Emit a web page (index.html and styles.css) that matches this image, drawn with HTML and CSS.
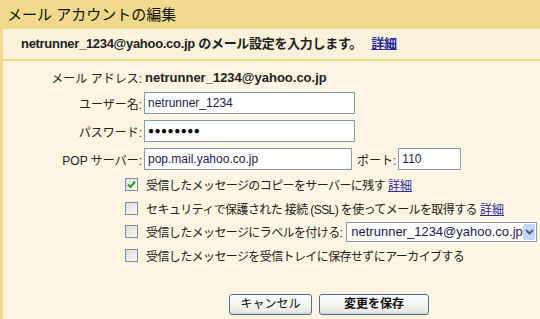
FILE: index.html
```html
<!DOCTYPE html>
<html lang="ja">
<head>
	<meta charset="UTF-8">
	<title>メール アカウントの編集</title>
	<link rel="stylesheet" href="styles.css">
</head>
<body>
<div class="title">メール アカウントの編集</div>
<div class="panel">
	<div class="intro">netrunner_1234@yahoo.co.jp のメール設定を入力します。 <a href="#">詳細</a></div>
	<div class="form">
		<div class="row first">
			<span class="label">メール アドレス:</span>
			<span class="value">netrunner_1234@yahoo.co.jp</span>
		</div>
		<div class="row">
			<span class="label">ユーザー名:</span>
			<span class="field wide">netrunner_1234</span>
		</div>
		<div class="row">
			<span class="label">パスワード:</span>
			<span class="field wide dots">●●●●●●●●</span>
		</div>
		<div class="row">
			<span class="label">POP サーバー:</span>
			<span class="field server">pop.mail.yahoo.co.jp</span>
			<span class="port-label">ポート:</span>
			<span class="field port">110</span>
		</div>
	</div>
	<div class="options">
		<div class="opt">
			<span class="box checked"><svg width="9" height="9" viewBox="0 0 9 9"><path d="M1 4.5 L3.5 7 L8 1.5" fill="none" stroke="#21a121" stroke-width="2"/></svg></span>
			<span>受信したメッセージのコピーをサーバーに残す</span><a href="#">詳細</a>
		</div>
		<div class="opt">
			<span class="box"></span>
			<span>セキュリティで保護された 接続 (SSL) を使ってメールを取得する</span><a href="#">詳細</a>
		</div>
		<div class="opt label-row">
			<span class="box"></span>
			<span>受信したメッセージにラベルを付ける:</span>
			<span class="select">
				<span class="select-text">netrunner_1234@yahoo.co.jp</span>
				<span class="arrow"><svg width="9" height="6" viewBox="0 0 9 6"><path d="M1 1 L4.5 4.5 L8 1" fill="none" stroke="#4d6185" stroke-width="2"/></svg></span>
			</span>
		</div>
		<div class="opt">
			<span class="box"></span>
			<span>受信したメッセージを受信トレイに保存せずにアーカイブする</span>
		</div>
	</div>
	<div class="buttons">
		<button class="btn cancel">キャンセル</button>
		<button class="btn save">変更を保存</button>
	</div>
</div>
</body>
</html>
```

FILE: styles.css
```css
body {
	margin: 0;
	font-family: "Liberation Sans", "Noto Sans CJK JP", sans-serif;
	font-size: 12px;
	color: #222;
	background: #FCF5E2;
	height: 319px;
	overflow: hidden;
}

a {
	color: #2B2BA0;
	text-decoration: underline;
}

.title {
	height: 29px;
	background: #F0D98A;
	font-size: 15px;
	line-height: 29px;
	padding-left: 7px;
	color: #111;
}

.panel {
	border-left: 3px solid #F0D98A;
	height: 290px;
}

.intro {
	height: 30px;
	line-height: 30px;
	padding-left: 18px;
	font-size: 13px;
	font-weight: bold;
	letter-spacing: -0.3px;
	color: #222;
	background: #FAF2DB;
	border-bottom: 2px solid #F0D98A;
	white-space: nowrap;
}

.intro a {
	margin-left: 6px;
}

.form {
	display: flex;
	flex-direction: column;
	gap: 6px;
	padding-top: 5px;
}

.row {
	display: flex;
	align-items: center;
	height: 22px;
}

.row.first {
	margin-bottom: -2px;
}

.label {
	width: 139px;
	text-align: right;
	margin-right: 2px;
}

.value {
	font-size: 13px;
	font-weight: bold;
	margin-left: 1px;
}

.field {
	box-sizing: border-box;
	height: 22px;
	border: 1px solid #7F9DB9;
	background: #FFF;
	padding: 0 3px;
	line-height: 20px;
	color: #1E1A4A;
}

.wide {
	width: 211px;
}

.dots {
	font-size: 10px;
	letter-spacing: 0.5px;
	color: #000;
}

.server {
	width: 208px;
}

.port-label {
	margin: 0 2px 0 5px;
}

.port {
	width: 63px;
}

.options {
	display: flex;
	flex-direction: column;
	padding: 2px 0 0 122px;
}

.opt {
	display: flex;
	align-items: center;
	height: 24px;
	letter-spacing: -0.6px;
	white-space: nowrap;
}

.opt.label-row {
	height: 23px;
}

.opt a {
	margin-left: 3px;
	letter-spacing: 0;
}

.box {
	box-sizing: border-box;
	width: 13px;
	height: 13px;
	border: 1px solid #7C8CA6;
	background: linear-gradient(135deg, #DCDCD6, #FBFBF9);
	margin-right: 8px;
	display: flex;
	align-items: center;
	justify-content: center;
	flex-shrink: 0;
}

.select {
	box-sizing: border-box;
	display: flex;
	align-items: center;
	height: 20px;
	width: 191px;
	margin-left: 4px;
	border: 1px solid #7F9DB9;
	background: #FFF;
	letter-spacing: 0;
}

.select-text {
	flex: 1;
	font-size: 13px;
	padding-left: 4px;
	color: #1E1A4A;
}

.arrow {
	width: 15px;
	height: 16px;
	margin-right: 1px;
	background: #C5D5F7;
	border-radius: 2px;
	display: flex;
	align-items: center;
	justify-content: center;
}

.buttons {
	display: flex;
	gap: 7px;
	padding: 27px 0 0 226px;
}

.btn {
	height: 21px;
	border: 1px solid #4F6F9A;
	border-radius: 3px;
	background: linear-gradient(#FFFFFF, #ECECE6 85%, #D6D0C5);
	font-family: "Liberation Sans", "Noto Sans CJK JP", sans-serif;
	font-size: 12px;
	color: #111;
	padding: 0;
	line-height: 19px;
}

.cancel {
	width: 83px;
}

.save {
	width: 110px;
	font-weight: bold;
}
```
